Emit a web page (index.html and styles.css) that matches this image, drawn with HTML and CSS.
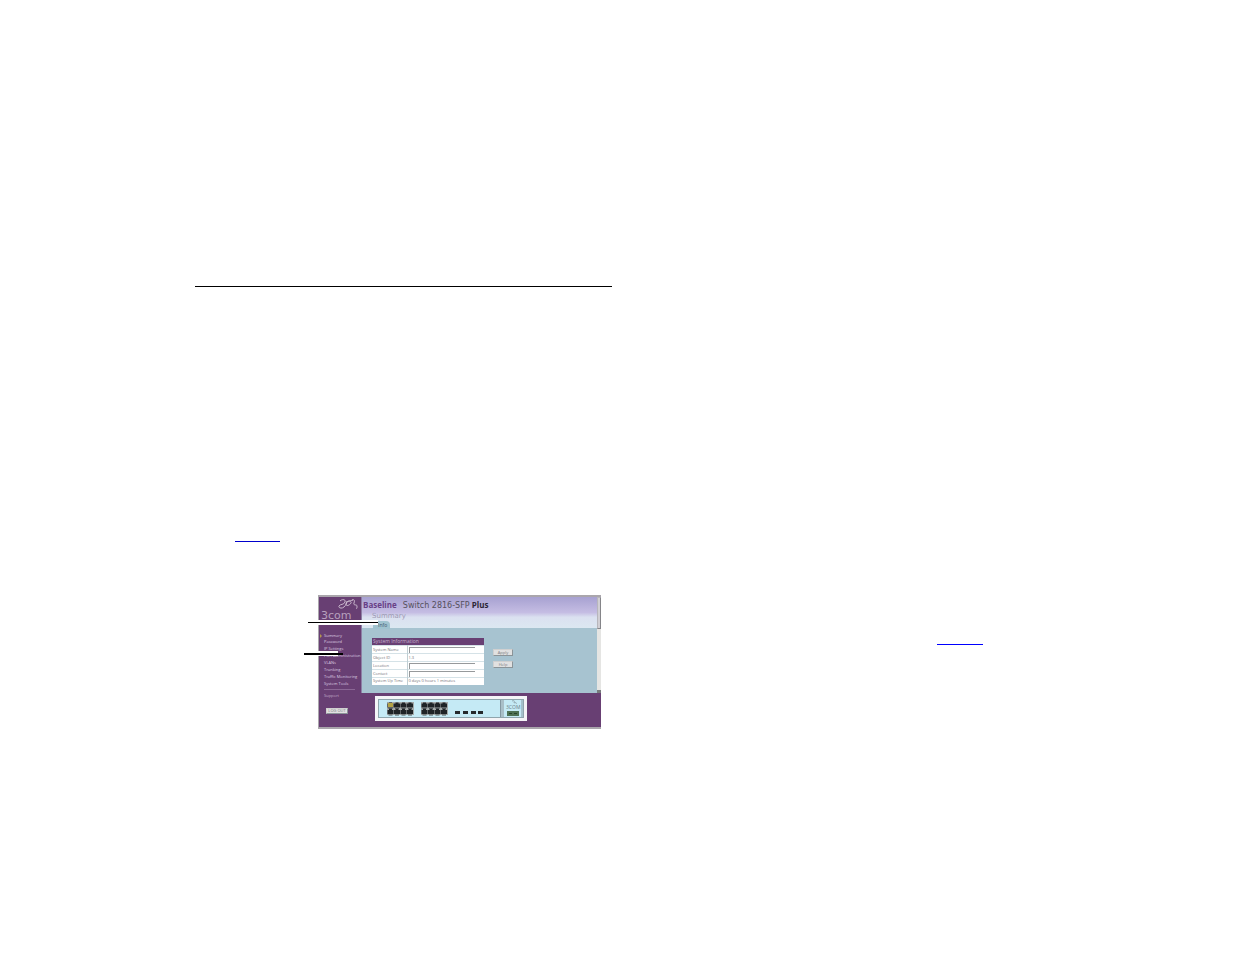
FILE: index.html
```html
<!DOCTYPE html>
<html lang="en">
<head>
    <meta charset="UTF-8">
    <meta name="viewport" content="width=device-width, initial-scale=1.0">
    <title>Baseline Switch 2816-SFP Plus</title>
    <link rel="stylesheet" href="styles.css">
</head>
<body>
    <div class="spread">
        <section class="page left-page">
            <hr class="rule">
            <a class="ref" href="#screen" aria-label="Go to the figure"></a>

            <div class="figure" id="screen">
                <div class="top">
                    <div class="sidebar">
                        <div class="logo">
                            <svg width="22" height="13" viewBox="0 0 22 13" aria-hidden="true">
                                <g fill="none" stroke="#c9b8cd" stroke-width="1">
                                    <path d="M3 3c2-2 6-2 5 1s-5 2-6 4 3 3 5 1 3-4 3-6"/>
                                    <path d="M9 5c2-3 6-2 5 0s-5 4-5 1 4-3 7-4"/>
                                    <path d="M15 2c2-1 3 0 2 3s3 1 3 3 0 3-1 2"/>
                                </g>
                            </svg>
                            <span>3com</span>
                        </div>
                        <ul class="menu">
                            <li class="active"><a href="#">Summary</a></li>
                            <li><a href="#">Password</a></li>
                            <li><a href="#">IP Settings</a></li>
                            <li><a href="#">Port Administration</a></li>
                            <li><a href="#">VLANs</a></li>
                            <li><a href="#">Trunking</a></li>
                            <li><a href="#">Traffic Monitoring</a></li>
                            <li><a href="#">System Tools</a></li>
                        </ul>
                    </div>
                    <div class="main">
                        <div class="header">
                            <h1><b>Baseline</b> <span>Switch 2816-SFP</span> <strong>Plus</strong></h1>
                            <h2>Summary</h2>
                            <a class="tab" href="#">Info</a>
                        </div>
                        <form class="content">
                            <table class="info">
                                <colgroup>
                                    <col class="label-col">
                                    <col>
                                </colgroup>
                                <thead>
                                    <tr><th colspan="2">System Information</th></tr>
                                </thead>
                                <tbody>
                                    <tr><td><label for="name">System Name</label></td><td><input type="text" id="name"></td></tr>
                                    <tr><td>Object ID</td><td>1.3</td></tr>
                                    <tr><td><label for="location">Location</label></td><td><input type="text" id="location"></td></tr>
                                    <tr><td><label for="contact">Contact</label></td><td><input type="text" id="contact"></td></tr>
                                    <tr><td>System Up Time</td><td>0 days 0 hours 1 minutes</td></tr>
                                </tbody>
                            </table>
                            <div class="actions">
                                <button type="button">Apply</button>
                                <button type="button">Help</button>
                            </div>
                        </form>
                    </div>
                    <div class="scrollbar"><div class="thumb"></div></div>
                </div>

                <div class="bottom">
                    <div class="support">
                        <a href="#">Support</a>
                        <button type="button">LOG OUT</button>
                    </div>
                    <div class="device">
                        <svg width="146" height="19" viewBox="0 0 146 19" role="img" aria-label="Switch front panel">
                            <defs>
                                <g id="jack">
                                    <path d="M0 1h1.500V0h3v1H6v4H0z" fill="#1f2326"/>
                                    <path d="M1 6h4" stroke="#4d5255" stroke-width="1"/>
                                </g>
                                <g id="jacks">
                                    <rect width="27" height="13" fill="#a4a9a8"/>
                                    <use href="#jack" x="0.500" y="0.500"/>
                                    <use href="#jack" x="7" y="0.500"/>
                                    <use href="#jack" x="13.500" y="0.500"/>
                                    <use href="#jack" x="20" y="0.500"/>
                                    <use href="#jack" x="0.500" y="7"/>
                                    <use href="#jack" x="7" y="7"/>
                                    <use href="#jack" x="13.500" y="7"/>
                                    <use href="#jack" x="20" y="7"/>
                                </g>
                            </defs>
                            <rect x="0.500" y="0.500" width="145" height="18" fill="#c5eaf5" stroke="#8fa5ad"/>
                            <use href="#jacks" x="9" y="3"/>
                            <rect x="10" y="4" width="5" height="4" fill="#b3a245"/>
                            <use href="#jacks" x="43" y="3"/>
                            <g fill="#25292c">
                                <rect x="77" y="12" width="5" height="3"/>
                                <rect x="85" y="12" width="5" height="3"/>
                                <rect x="93" y="12" width="5" height="3"/>
                                <rect x="100" y="12" width="5" height="3"/>
                            </g>
                            <rect x="122" y="1" width="4" height="17" fill="#a9bfc8"/>
                            <path d="M122.500 1v17M144 1v17" stroke="#8498a2"/>
                            <path d="M134 2c2-1 3 0 2 2 2-1 3 0 2 1" fill="none" stroke="#94abb4"/>
                            <text x="128" y="10" font-size="5" fill="#6b7e88">3COM</text>
                            <rect x="129" y="12" width="12" height="5" fill="#4e7154"/>
                            <path d="M131 14.500h3M136 14.500h3" stroke="#27442c"/>
                        </svg>
                    </div>
                </div>

                <div class="callout callout-tab"></div>
                <div class="callout callout-menu"></div>
            </div>
        </section>

        <section class="page right-page">
            <a class="ref" href="#screen" aria-label="Go to the figure"></a>
        </section>
    </div>
</body>
</html>
```
FILE: styles.css
```css
* {
    box-sizing: border-box;
}
body {
    font-family: "Open Sans", sans-serif;
    background-color: white;
    margin: 0;
}
a {
    color: inherit;
    text-decoration: none;
}
.spread {
    display: grid;
    grid-template-columns: 612fr 623fr;
    min-height: 100vh;
}
.left-page {
    padding: 286px 0 0 195px;
}
.right-page {
    padding: 630px 0 0 325px;
}
.rule {
    margin: 0;
    border: none;
    border-top: 1px solid black;
}
.ref {
    display: block;
    width: 46px;
    height: 15px;
    border-bottom: 1px solid #0000ff;
}
.left-page .ref {
    width: 45px;
    margin: 240px 0 0 40px;
    border-color: #0000cc;
}

/* switch screen */
.figure {
    position: relative;
    margin: 53px 11px 0 123px;
    border: 1px solid #aaa6ac;
    border-width: 2px 0 2px 1px;
    background-color: #683f73;
    font-size: 5px;
    line-height: 7px;
}
.top {
    display: flex;
    height: 96px;
}
.sidebar {
    width: 43px;
    color: #dccbe0;
    border-right: 1px solid #8d7fa5;
}
.logo {
    height: 34px;
    padding-left: 2px;
    color: #b7a0bd;
    font-size: 11px;
    line-height: 12px;
}
.logo svg {
    display: block;
    margin: 1px 0 0 16px;
}
.logo span {
    display: block;
    margin-top: -1px;
    font-family: "DejaVu Sans", sans-serif;
}
.menu {
    list-style: none;
    margin: 0;
    padding: 0 0 0 5px;
    font-size: 4px;
    white-space: nowrap;
}
.menu li {
    height: 7px;
}
.menu .active {
    height: 6px;
}
.menu .active::before {
    content: "";
    float: left;
    margin: 2px 0 0 -4px;
    border: 2px solid transparent;
    border-left-color: #b3954f;
    border-right: none;
}
.main {
    flex: 1;
    background-color: #a7c3d0;
}
.header {
    height: 31px;
    padding: 1px 0 0 1px;
    background: linear-gradient(#a7a1d1, #c5bde3 50%, #dbe1f0 65%, #dce7f1);
}
h1 {
    margin: 0;
    color: #55505c;
    font-size: 8px;
    font-weight: normal;
    line-height: 13px;
    white-space: nowrap;
}
h1 b {
    margin-right: 4px;
    color: #683f87;
}
h1 span {
    font-family: "DejaVu Sans", sans-serif;
}
h1 strong {
    color: #2c2635;
}
h2 {
    margin: 0 0 0 9px;
    color: #9d9ab3;
    font-family: "DejaVu Sans", sans-serif;
    font-size: 7px;
    font-weight: normal;
    line-height: 9px;
}
.tab {
    display: block;
    width: 17px;
    margin-left: 10px;
    padding-left: 5px;
    border-radius: 1px 4px 0 0;
    background-color: #a0c3cf;
    color: #40566c;
    line-height: 8px;
}
.content {
    display: flex;
    gap: 9px;
    padding: 10px 0 0 10px;
}
.info {
    width: 112px;
    border-collapse: collapse;
    table-layout: fixed;
    background-color: white;
    color: #77747b;
    font-size: 4px;
    white-space: nowrap;
}
.label-col {
    width: 35px;
}
.info th {
    height: 7px;
    padding: 0 1px;
    background-color: #683f73;
    color: #c5b1cd;
    font-size: 5px;
    font-weight: normal;
    line-height: 7px;
    text-align: left;
}
.info td {
    height: 8px;
    padding: 0 1px;
    border-top: 1px solid #d5e2e7;
    line-height: 6px;
    vertical-align: middle;
}
.info td:first-child {
    border-right: 1px solid #c1cfd4;
}
.info tr:last-child td {
    height: 7px;
}
.info input {
    display: block;
    width: 66px;
    height: 6px;
    padding: 0;
    border: 1px solid #96999b;
    border-width: 1px 0 0 1px;
    font-size: 4px;
}
.actions {
    display: flex;
    flex-direction: column;
    gap: 5px;
    padding-top: 11px;
}
button {
    display: block;
    width: 20px;
    height: 7px;
    padding: 0;
    border: 1px solid #d0d0d0;
    border-right-color: #8b9498;
    border-bottom-color: #8b9498;
    background-color: #e1e1e1;
    color: #77777c;
    font-family: inherit;
    font-size: 4px;
    line-height: 4px;
}
.scrollbar {
    width: 4px;
    background-color: #e5e5e3;
    border-bottom: 3px solid #777b7c;
}
.thumb {
    height: 32px;
    border: 1px solid #b7b6bc;
    border-right-color: #858589;
    border-bottom-color: #858589;
    background-color: #d1cfd4;
}
.bottom {
    display: flex;
    height: 34px;
    font-size: 4px;
}
.support {
    width: 56px;
    padding-left: 5px;
    color: #c2abc8;
    line-height: 6px;
}
.support::before {
    content: "";
    display: block;
    width: 31px;
    margin-top: -4px;
    margin-bottom: 3px;
    border-top: 1px solid #8b6795;
}
.support a {
    display: block;
}
.support button {
    width: 22px;
    height: 6px;
    margin: 9px 0 0 2px;
}
.device {
    align-self: flex-start;
    margin-top: 3px;
    padding: 3px;
    background-color: #f4f4f7;
}
.device svg {
    display: block;
}

/* leader lines over the screen */
.callout {
    position: absolute;
    background-color: white;
}
.callout::after {
    content: "";
    display: block;
    background-color: black;
}
.callout-tab {
    top: 23px;
    left: -11px;
    width: 70px;
    height: 5px;
    padding-top: 2px;
}
.callout-tab::after {
    height: 1px;
}
.callout-menu {
    top: 54px;
    left: -15px;
    width: 34px;
    height: 5px;
    padding-top: 2px;
}
.callout-menu::after {
    width: 39px;
    height: 2px;
}
```
